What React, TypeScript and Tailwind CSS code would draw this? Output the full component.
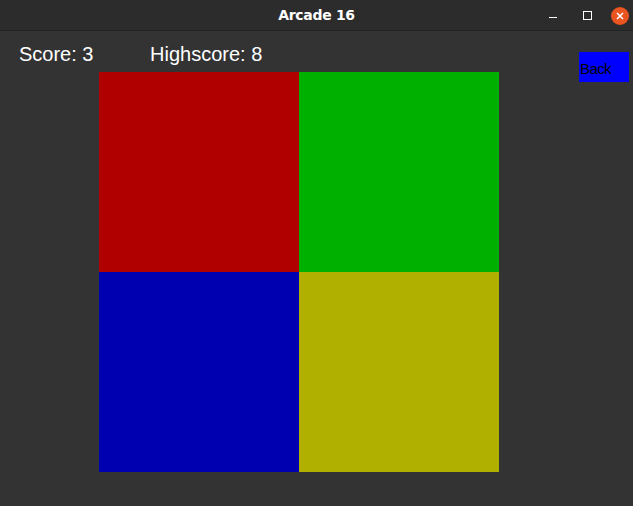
export default function App() {
  return (
    <div className="w-[633px] h-[506px] bg-[#333333] flex flex-col overflow-hidden">
      {/* window title bar */}
      <div className="h-[31px] bg-[#2c2c2c] border-b border-[#222222] flex items-center relative shrink-0">
        <div className="flex-1 text-center text-white font-bold text-[14px] font-['DejaVu_Sans',sans-serif] tracking-[-0.3px]">
          Arcade 16
        </div>
        <div className="absolute right-[4px] top-0 h-[31px] flex items-center">
          <div className="w-[8px] h-[1.5px] bg-white mt-[4px]" />
          <div className="w-[9px] h-[9px] border border-white ml-[26px]" />
          <div className="w-[18px] h-[18px] rounded-full bg-[#e95420] flex items-center justify-center ml-[19px]">
            <svg width="10" height="10" viewBox="0 0 10 10">
              <path d="M2 2 L8 8 M8 2 L2 8" stroke="white" strokeWidth="1.5" />
            </svg>
          </div>
        </div>
      </div>

      <div className="flex flex-1">
        <div className="flex flex-col">
          <div className="flex h-[41px] pl-[19px] pt-[11px] text-white text-[20px] leading-[24px] font-['Liberation_Sans',sans-serif]">
            <span className="w-[131px]">Score: 3</span>
            <span>Highscore: 8</span>
          </div>
          <div className="ml-[99px] grid grid-cols-[200px_200px] grid-rows-[200px_200px]">
            <div className="bg-[#b00000]" />
            <div className="bg-[#00b000]" />
            <div className="bg-[#0000b0]" />
            <div className="bg-[#b0b000]" />
          </div>
        </div>
        <div className="flex-1 flex justify-end pr-[4px] pt-[21px]">
          <button className="w-[50px] h-[30px] bg-[#0000ff] text-black text-[15px] leading-[18px] tracking-[-0.6px] font-['Liberation_Sans',sans-serif] text-left pl-[1px] pt-[4px]">
            Back
          </button>
        </div>
      </div>
    </div>
  );
}
